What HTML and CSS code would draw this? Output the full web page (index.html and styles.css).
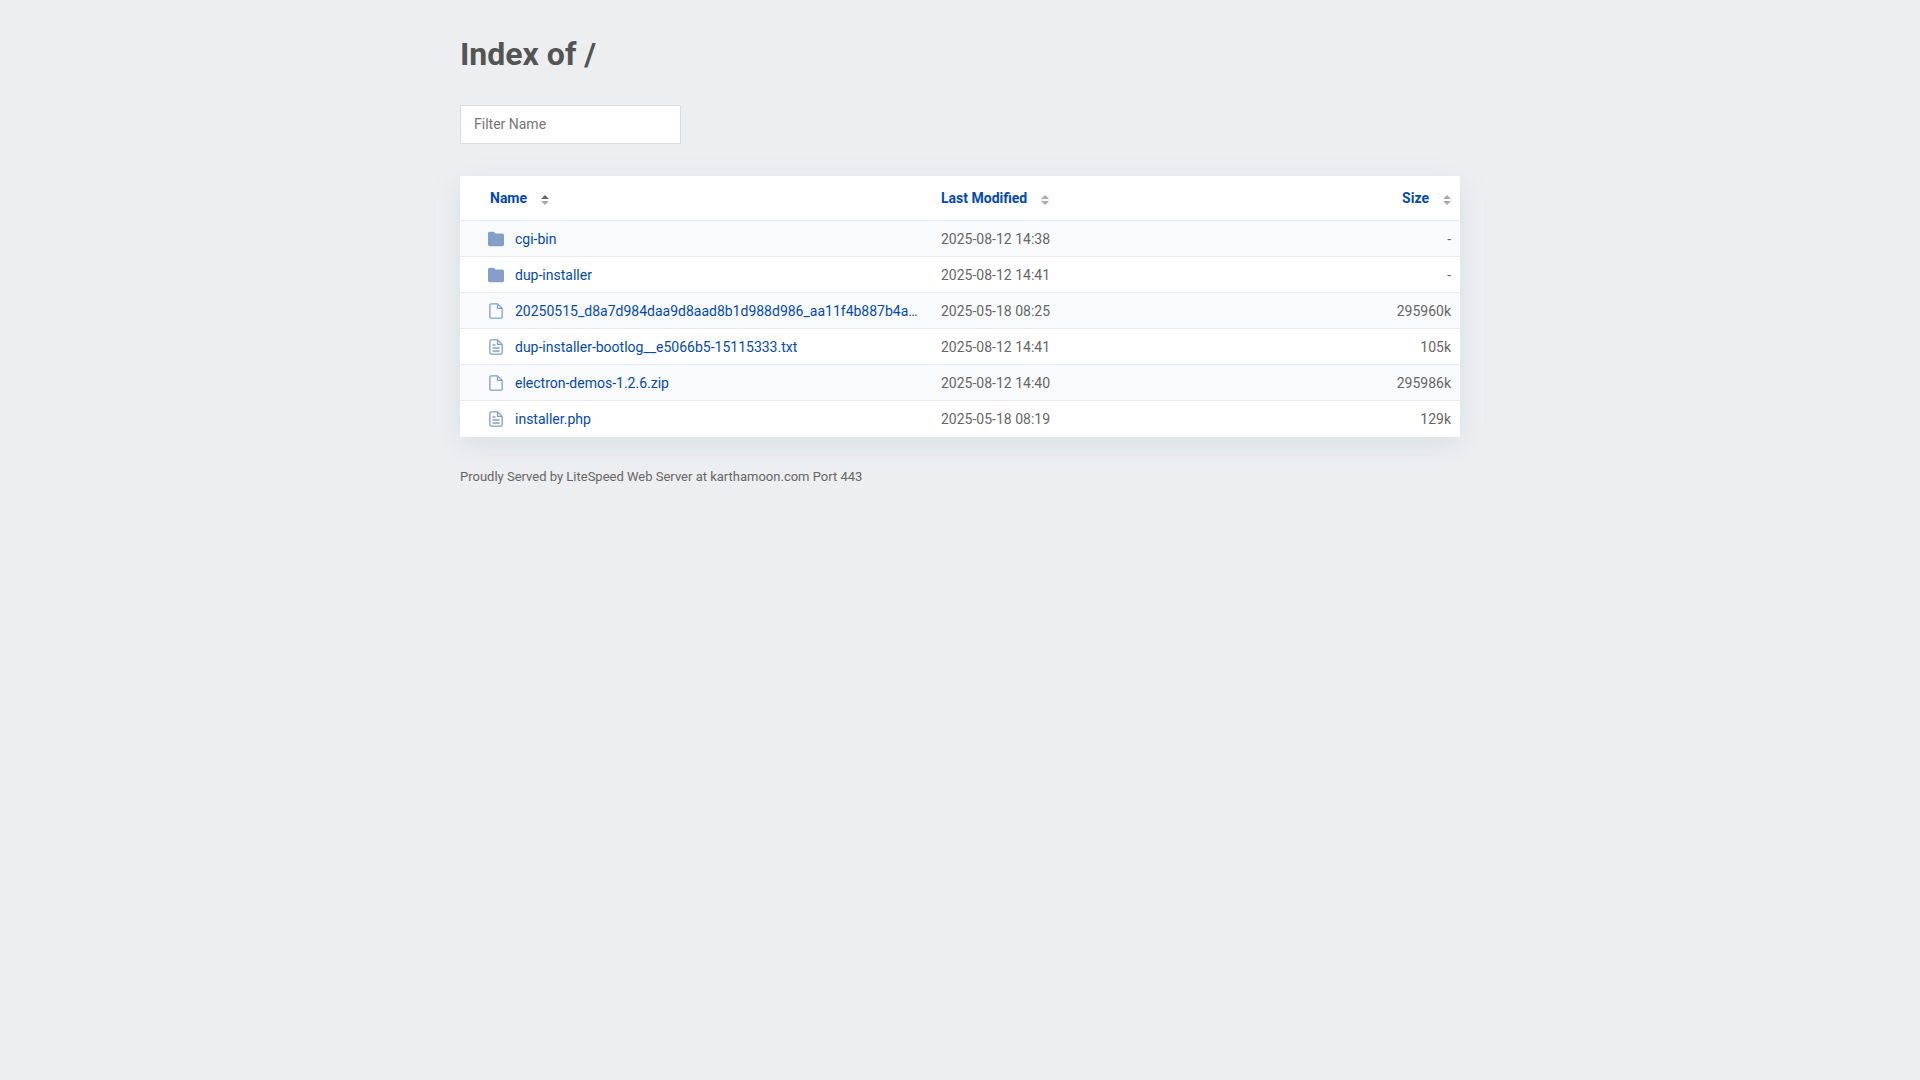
FILE: index.html
```
<!DOCTYPE html>
<html lang="en">
<head>
<meta charset="UTF-8">
<meta name="viewport" content="width=device-width, initial-scale=1.0">
<title>Index of /</title>
<link rel="stylesheet" href="styles.css">
</head>
<body>
<svg class="sprite" aria-hidden="true">
    <symbol id="folder" viewBox="0 0 16 16">
        <path d="M1.6 .8h4.200l1.700 1.800h6.800A1.700 1.700 0 0 1 16 4.300v9.200a1.700 1.700 0 0 1-1.700 1.700H1.700A1.700 1.700 0 0 1 0 13.500V2.400A1.600 1.600 0 0 1 1.600 .8z" fill="currentColor"/>
    </symbol>
    <symbol id="file" viewBox="0 0 16 16">
        <path d="M9.500 .8H3.200A1.400 1.400 0 0 0 1.900 2.200v11.600a1.400 1.400 0 0 0 1.300 1.400h9.600a1.400 1.400 0 0 0 1.400-1.400V5.400zM9.500 .8v4.600h4.700" fill="none" stroke="currentColor" stroke-width="1.300"/>
    </symbol>
    <symbol id="text" viewBox="0 0 16 16">
        <use href="#file"/>
        <path d="M4.500 6h3M4.500 9h7M4.500 12h7" fill="none" stroke="currentColor" stroke-width="1.300"/>
    </symbol>
    <symbol id="sort" viewBox="0 0 8 10">
        <path class="up" d="M0 4l4-4 4 4z"/>
        <path class="down" d="M0 6l4 4 4-4z"/>
    </symbol>
</svg>
<div class="content">
    <h1>Index of /</h1>
    <input class="filter" type="text" id="filter" placeholder="Filter Name" aria-label="Filter Name">
    <table class="listing">
        <thead>
            <tr>
                <th class="col-name"><a href="#" class="asc">Name<svg class="sort"><use href="#sort"/></svg></a></th>
                <th class="col-date"><a href="#">Last Modified<svg class="sort"><use href="#sort"/></svg></a></th>
                <th class="col-size"><a href="#">Size<svg class="sort"><use href="#sort"/></svg></a></th>
            </tr>
        </thead>
        <tbody>
            <tr>
                <td class="col-name"><a href="#"><svg class="icon"><use href="#folder"/></svg><span>cgi-bin</span></a></td>
                <td>2025-08-12 14:38</td>
                <td class="col-size">-</td>
            </tr>
            <tr>
                <td class="col-name"><a href="#"><svg class="icon"><use href="#folder"/></svg><span>dup-installer</span></a></td>
                <td>2025-08-12 14:41</td>
                <td class="col-size">-</td>
            </tr>
            <tr>
                <td class="col-name"><a href="#"><svg class="icon"><use href="#file"/></svg><span>20250515_d8a7d984daa9d8aad8b1d988d986_aa11f4b887b4a…</span></a></td>
                <td>2025-05-18 08:25</td>
                <td class="col-size">295960k</td>
            </tr>
            <tr>
                <td class="col-name"><a href="#"><svg class="icon"><use href="#text"/></svg><span>dup-installer-bootlog__e5066b5-15115333.txt</span></a></td>
                <td>2025-08-12 14:41</td>
                <td class="col-size">105k</td>
            </tr>
            <tr>
                <td class="col-name"><a href="#"><svg class="icon"><use href="#file"/></svg><span>electron-demos-1.2.6.zip</span></a></td>
                <td>2025-08-12 14:40</td>
                <td class="col-size">295986k</td>
            </tr>
            <tr>
                <td class="col-name"><a href="#"><svg class="icon"><use href="#text"/></svg><span>installer.php</span></a></td>
                <td>2025-05-18 08:19</td>
                <td class="col-size">129k</td>
            </tr>
        </tbody>
    </table>
    <p class="footer">Proudly Served by LiteSpeed Web Server at karthamoon.com Port 443</p>
</div>
</body>
</html>
```

FILE: styles.css
```
body {
    margin: 0;
    padding: 32px 20px;
    background-color: #edeef0;
    color: #666;
    font-family: Roboto, Arial, sans-serif;
    font-size: 14px;
    line-height: 20px;
}
.sprite {
    display: none;
}
.content {
    max-width: 1000px;
    margin: 0 auto;
}
h1 {
    margin: 0 0 29px;
    color: #545454;
    font-size: 32px;
    line-height: 44px;
}
.filter {
    display: block;
    box-sizing: border-box;
    width: 221px;
    height: 39px;
    padding: 0 14px 2px 13px;
    margin-bottom: 32px;
    border: 1px solid #dadcdf;
    background-color: #fff;
    font: inherit;
}
.filter::placeholder {
    color: #757575;
}
a {
    color: #0349ad;
    text-decoration: none;
}
a:hover {
    text-decoration: underline;
}
.listing {
    width: 100%;
    table-layout: fixed;
    border-spacing: 0;
    border-bottom: 1px solid #fff;
    background-color: #fff;
    box-shadow: 0 8px 24px rgba(154, 178, 186, 0.22);
}
th {
    padding: 12px 9px;
    text-align: left;
}
td {
    padding: 8px 9px 7px;
    border-top: 1px solid #e9ebee;
}
tbody tr:nth-child(odd) {
    background-color: #f9fafc;
}
.listing .col-name {
    width: 433px;
    padding-left: 30px;
}
tbody .col-name a {
    display: flex;
    align-items: center;
    gap: 11px;
    margin-left: -2px;
}
.col-name span {
    overflow: hidden;
    white-space: nowrap;
    text-overflow: ellipsis;
}
.listing .col-size {
    width: 150px;
    text-align: right;
}
.icon {
    flex: none;
    width: 16px;
    height: 16px;
    color: #839fc8;
}
.sort {
    width: 8px;
    height: 10px;
    margin-left: 14px;
    vertical-align: -2px;
    fill: #aaa;
}
.asc .sort {
    fill: #666;
}
.down {
    fill: #aaa;
}
.footer {
    margin: 30px 0 0;
    font-size: 13px;
}
```
